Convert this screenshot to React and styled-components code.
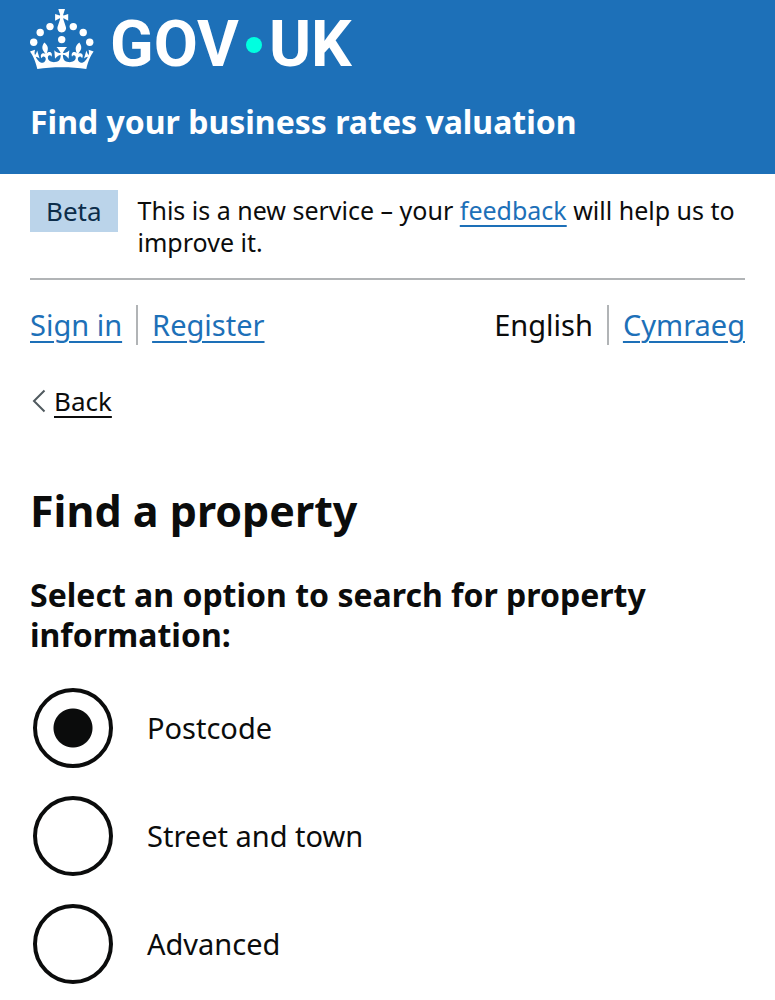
import React, {useState} from 'react'
import styled, {createGlobalStyle} from 'styled-components'

const blue = '#1d70b8';
const black = '#0b0c0c';
const grey = '#b1b4b6';

const GlobalStyle = createGlobalStyle`
  * {
    box-sizing: border-box;
  }
  body {
    margin: 0;
    background: #fff;
    color: ${black};
    font-family: "Noto Sans", "Open Sans", sans-serif;
  }
`;

const Header = styled.header`
  background: ${blue};
  color: #fff;
  padding: 8px 30px 32px;
`;

const LogoLink = styled.a`
  display: flex;
  align-items: center;
  height: 62px;
  color: #fff;
  text-decoration: none;
`;

const Crown = styled.svg`
  width: 64px;
  height: 60px;
  margin-right: 16px;
  fill: currentColor;
`;

const Wordmark = styled.span`
  display: flex;
  align-items: center;
  gap: 7px;
  font-family: Roboto, Arial, sans-serif;
  font-size: 64px;
  line-height: 62px;
  font-weight: 700;
  padding-top: 12px;
`;

const Dot = styled.span`
  width: 16px;
  height: 16px;
  border-radius: 50%;
  background: #00ffe0;
`;

const ServiceName = styled.a`
  display: block;
  color: #fff;
  font-size: 32px;
  line-height: 40px;
  font-weight: 700;
  text-decoration: none;
  margin-top: 32px;
`;

const Container = styled.div`
  padding: 0 30px;
`;

const PhaseBanner = styled.div`
  display: flex;
  align-items: flex-start;
  gap: 20px;
  padding: 16px 0 20px;
  border-bottom: 2px solid ${grey};
`;

const Tag = styled.strong`
  flex: none;
  padding: 0 16px;
  background: #bbd4ea;
  color: #0c2d4a;
  font-size: 26px;
  line-height: 42px;
  font-weight: 400;
`;

const PhaseText = styled.p`
  margin: 0;
  padding-top: 4px;
  font-size: 25px;
  line-height: 32px;
`;

const Link = styled.a`
  color: ${props => props.$plain ? black : blue};
  text-decoration: underline;
  text-decoration-thickness: 2px;
  text-underline-offset: 5px;
`;

const NavRow = styled.div`
  display: flex;
  justify-content: space-between;
  margin-top: 25px;
  font-size: 29px;
  line-height: 40px;
`;

const NavList = styled.nav`
  display: flex;
`;

const NavItem = styled.span`
  & + & {
    margin-left: 14px;
    padding-left: 14px;
    border-left: 2px solid ${grey};
  }
`;

const BackRow = styled.div`
  display: flex;
  align-items: center;
  gap: 8px;
  margin-top: 40px;
  font-size: 26px;
  line-height: 32px;
`;

const Chevron = styled.svg`
  width: 16px;
  height: 24px;
  fill: none;
  stroke: #505a5f;
  stroke-width: 2;
`;

const Title = styled.h1`
  margin: 66px 0 0;
  font-size: 43px;
  line-height: 56px;
  font-weight: 700;
`;

const Fieldset = styled.fieldset`
  min-width: 0;
  margin: 36px 0 0;
  padding: 0 0 16px;
  border: 0;
`;

const Legend = styled.legend`
  padding: 0;
  margin-bottom: 33px;
  font-size: 32px;
  line-height: 40px;
  font-weight: 700;
`;

const RadioList = styled.div`
  display: flex;
  flex-direction: column;
  gap: 28px;
  padding-left: 3px;
`;

const RadioRow = styled.label`
  display: flex;
  align-items: center;
  gap: 34px;
  font-size: 29px;
  line-height: 40px;
`;

const Radio = styled.input`
  appearance: none;
  flex: none;
  width: 80px;
  height: 80px;
  margin: 0;
  border: 4px solid ${black};
  border-radius: 50%;
  background: #fff;
  &:checked {
    background: radial-gradient(circle, ${black} 19px, #fff 20px);
  }
`;

const CrownIcon = () => (
  <Crown viewBox="0 0 64 60" aria-hidden="true">
    <circle cx="20" cy="17.6" r="3.7"/>
    <circle cx="10.2" cy="23.5" r="3.7"/>
    <circle cx="3.7" cy="33.2" r="3.7"/>
    <circle cx="31.7" cy="30.6" r="3.7"/>
    <circle cx="43.3" cy="17.6" r="3.7"/>
    <circle cx="53.2" cy="23.5" r="3.7"/>
    <circle cx="59.7" cy="33.2" r="3.7"/>
    <path d="M33.1,9.8c.2-.1.3-.3.5-.5l4.6,2.4v-6.8l-4.6,1.5c-.1-.2-.3-.3-.5-.5l1.9-5.9h-6.7l1.9,5.9c-.2.1-.3.3-.5.5l-4.6-1.5v6.8l4.6-2.4c.1.2.3.3.5.5l-2.6,8c-.9,2.8,1.2,5.7,4.1,5.7h0c3,0,5.1-2.9,4.1-5.7l-2.6-8ZM37,37.9s-3.4,3.8-4.1,6.1c2.2,0,4.2-.5,6.4-2.8l-.7,8.5c-2-2.8-4.4-4.1-5.7-3.8.1,3.1.5,6.7,5.8,7.2,3.7.3,6.7-1.5,7-3.8.4-2.6-2-4.3-3.7-1.6-1.4-4.5,2.4-6.1,4.9-3.2-1.9-4.5-1.8-7.7,2.4-10.9,3,4,2.6,7.3-1.2,11.1,2.4-1.3,6.2,0,4,4.6-1.2-2.8-3.7-2.2-4.2.2-.3,1.7.7,3.7,3,4.2,1.9.3,4.7-.9,7-5.9-1.3,0-2.4.7-3.9,1.7l2.4-8c.6,2.3,1.4,3.7,2.2,4.5.6-1.6.5-2.8,0-5.3l5,1.8c-2.6,3.6-5.2,8.7-7.3,17.5-7.4-1.1-15.7-1.7-24.5-1.7h0c-8.8,0-17.1.6-24.5,1.7-2.1-8.9-4.7-13.9-7.3-17.5l5-1.8c-.5,2.5-.6,3.7,0,5.3.8-.8,1.6-2.3,2.2-4.5l2.4,8c-1.5-1-2.6-1.7-3.9-1.7,2.3,5,5.2,6.2,7,5.9,2.3-.4,3.3-2.4,3-4.2-.5-2.4-3-3.1-4.2-.2-2.2-4.6,1.6-6,4-4.6-3.7-3.7-4.2-7.1-1.2-11.1,4.2,3.2,4.3,6.4,2.4,10.9,2.5-2.8,6.3-1.3,4.9,3.2-1.8-2.7-4.1-1-3.7,1.6.3,2.3,3.3,4.1,7,3.8,5.4-.5,5.7-4.2,5.8-7.2-1.3-.2-3.7,1-5.7,3.8l-.7-8.5c2.2,2.3,4.2,2.7,6.4,2.8-.7-2.3-4.1-6.1-4.1-6.1h10.6,0Z"/>
  </Crown>
)

const options = [
  {value: 'postcode', label: 'Postcode'},
  {value: 'street', label: 'Street and town'},
  {value: 'advanced', label: 'Advanced'},
]

const App = () => {
  const [selected, setSelected] = useState('postcode');

  return (
    <>
      <GlobalStyle/>
      <Header>
        <LogoLink href="#">
          <CrownIcon/>
          <Wordmark><span>GOV</span><Dot/><span>UK</span></Wordmark>
        </LogoLink>
        <ServiceName href="#">Find your business rates valuation</ServiceName>
      </Header>
      <Container>
        <PhaseBanner>
          <Tag>Beta</Tag>
          <PhaseText>
            This is a new service – your <Link href="#">feedback</Link> will help us to improve it.
          </PhaseText>
        </PhaseBanner>
        <NavRow>
          <NavList>
            <NavItem><Link href="#">Sign in</Link></NavItem>
            <NavItem><Link href="#">Register</Link></NavItem>
          </NavList>
          <NavList>
            <NavItem>English</NavItem>
            <NavItem><Link href="#">Cymraeg</Link></NavItem>
          </NavList>
        </NavRow>
        <BackRow>
          <Chevron viewBox="0 0 16 24" aria-hidden="true"><path d="M14.5 1.5L4 12l10.5 10.5"/></Chevron>
          <Link $plain href="#">Back</Link>
        </BackRow>
        <main>
          <Title>Find a property</Title>
          <Fieldset>
            <Legend>Select an option to search for property information:</Legend>
            <RadioList>
              {options.map(({value, label}) => (
                <RadioRow key={value}>
                  <Radio
                    type="radio"
                    name="search"
                    value={value}
                    checked={selected === value}
                    onChange={() => setSelected(value)}
                  />
                  {label}
                </RadioRow>
              ))}
            </RadioList>
          </Fieldset>
        </main>
      </Container>
    </>
  );
}

export default App;
